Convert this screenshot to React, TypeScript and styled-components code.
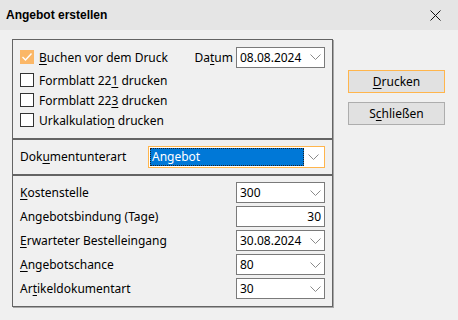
import React from "react";
import styled, { createGlobalStyle } from "styled-components";

const Global = createGlobalStyle`
  html, body { margin: 0; padding: 0; background: #f0f0f0; }
  body { font-family: "Noto Sans", "Open Sans", sans-serif; font-size: 12px; color: #000; }
`;

const Window = styled.div`
  width: 458px;
  height: 320px;
  background: #f0f0f0;
  display: flex;
  flex-direction: column;
  overflow: hidden;
`;

const TitleBar = styled.div`
  height: 30px;
  flex: none;
  background: #e5e5e5;
  display: flex;
  align-items: center;
  justify-content: space-between;
  padding-left: 6px;
`;

const Title = styled.div`
  font-family: "Liberation Sans", Arial, sans-serif;
  font-weight: bold;
  font-size: 12px;
  color: #000;
`;

const CloseBtn = styled.div`
  width: 46px;
  height: 30px;
  display: flex;
  align-items: center;
  justify-content: center;
`;

const Body = styled.div`
  display: flex;
  padding: 9px 0 0 12px;
`;

const LeftCol = styled.div`
  width: 321px;
  display: flex;
  flex-direction: column;
`;

const Panel = styled.div<{ $h: number }>`
  box-sizing: border-box;
  height: ${(p) => p.$h}px;
  border: 1px solid #646464;
  box-shadow: 1px 1px 0 #a8a8a8;
  padding: 6px 7px 0 7px;
  display: flex;
  flex-direction: column;
`;

const TopRow = styled.div`
  height: 22px;
  display: flex;
  align-items: center;
  justify-content: space-between;
  margin-bottom: 2px;
`;

const CheckRow = styled.label`
  height: 20px;
  display: flex;
  align-items: center;
  gap: 5px;
  white-space: nowrap;
`;

const Box = styled.span<{ $checked?: boolean }>`
  box-sizing: border-box;
  width: 14px;
  height: 14px;
  flex: none;
  border: 1px solid ${(p) => (p.$checked ? "#fbb767" : "#333")};
  background: ${(p) => (p.$checked ? "#fbb767" : "#fff")};
  display: flex;
  align-items: center;
  justify-content: center;
`;

const DateGroup = styled.div`
  display: flex;
  align-items: center;
  gap: 3px;
`;

const Key = styled.span`
  text-decoration: underline;
  text-underline-offset: 2px;
`;

const FieldRow = styled.div<{ $gap?: number }>`
  height: 21px;
  display: flex;
  align-items: center;
  margin-bottom: 3px;
`;

const Label = styled.div`
  flex: 1;
  white-space: nowrap;
`;

const Combo = styled.div<{ $w: number; $focus?: boolean }>`
  box-sizing: border-box;
  width: ${(p) => p.$w}px;
  height: ${(p) => (p.$focus ? 22 : 21)}px;
  flex: none;
  background: #fff;
  border: 1px solid ${(p) => (p.$focus ? "#ffb54c" : "#7a7a7a")};
  display: flex;
  align-items: stretch;
  padding: ${(p) => (p.$focus ? "1px" : "0")};
`;

const ComboText = styled.div`
  flex: 1;
  display: flex;
  align-items: center;
  padding-left: 3px;
  white-space: nowrap;
`;

const Selected = styled.div`
  flex: 1;
  display: flex;
  align-items: center;
  padding-left: 2px;
  background: #0078d7;
  color: #fff;
  outline: 1px dotted #222;
  outline-offset: -1px;
`;

const Arrow = styled.div<{ $w: number }>`
  width: ${(p) => p.$w}px;
  flex: none;
  display: flex;
  align-items: center;
  justify-content: center;
`;

const TextInput = styled.div`
  box-sizing: border-box;
  width: 89px;
  height: 21px;
  flex: none;
  background: #fff;
  border: 1px solid #7a7a7a;
  display: flex;
  align-items: center;
  justify-content: flex-end;
  padding-right: 3px;
`;

const RightCol = styled.div`
  margin-left: 15px;
  padding-top: 31px;
  display: flex;
  flex-direction: column;
  gap: 9px;
`;

const Button = styled.div<{ $default?: boolean }>`
  box-sizing: border-box;
  width: 97px;
  height: 23px;
  background: #e1e1e1;
  border: 1px solid ${(p) => (p.$default ? "#ffb54c" : "#adadad")};
  display: flex;
  align-items: center;
  justify-content: center;
`;

const Chevron = () => (
  <svg width="11" height="6" viewBox="0 0 11 6">
    <polyline points="0.5,0.5 5.5,5.5 10.5,0.5" fill="none" stroke="#8a8a8a" strokeWidth="1" />
  </svg>
);

const Check = () => (
  <svg width="12" height="10" viewBox="0 0 12 10">
    <polyline points="1.5,5 4.5,8 10.5,1.5" fill="none" stroke="#fff" strokeWidth="1.4" />
  </svg>
);

const Cross = () => (
  <svg width="11" height="11" viewBox="0 0 11 11">
    <path d="M0.5 0.5 L10.5 10.5 M10.5 0.5 L0.5 10.5" stroke="#111" strokeWidth="1" />
  </svg>
);

const ComboBox = ({ w, value }: { w: number; value: string }) => (
  <Combo $w={w}>
    <ComboText>{value}</ComboText>
    <Arrow $w={18}>
      <Chevron />
    </Arrow>
  </Combo>
);

export default function App() {
  return (
    <>
      <Global />
      <Window>
        <TitleBar>
          <Title>Angebot erstellen</Title>
          <CloseBtn>
            <Cross />
          </CloseBtn>
        </TitleBar>
        <Body>
          <LeftCol>
            <Panel $h={100}>
              <TopRow>
                <CheckRow>
                  <Box $checked>
                    <Check />
                  </Box>
                  <span>
                    <Key>B</Key>uchen vor dem Druck
                  </span>
                </CheckRow>
                <DateGroup>
                  <span>
                    Da<Key>t</Key>um
                  </span>
                  <ComboBox w={89} value="08.08.2024" />
                </DateGroup>
              </TopRow>
              <CheckRow>
                <Box />
                <span>
                  Formblatt 22<Key>1</Key> drucken
                </span>
              </CheckRow>
              <CheckRow>
                <Box />
                <span>
                  Formblatt 22<Key>3</Key> drucken
                </span>
              </CheckRow>
              <CheckRow>
                <Box />
                <span>
                  Urkalkulatio<Key>n</Key> drucken
                </span>
              </CheckRow>
            </Panel>
            <Panel $h={36}>
              <FieldRow>
                <Label>
                  Dok<Key>u</Key>mentunterart
                </Label>
                <Combo $w={177} $focus>
                  <Selected>Angebot</Selected>
                  <Arrow $w={19}>
                    <Chevron />
                  </Arrow>
                </Combo>
              </FieldRow>
            </Panel>
            <Panel $h={132}>
              <FieldRow>
                <Label>
                  <Key>K</Key>ostenstelle
                </Label>
                <ComboBox w={89} value="300" />
              </FieldRow>
              <FieldRow>
                <Label>Angebotsbindung (Tage)</Label>
                <TextInput>30</TextInput>
              </FieldRow>
              <FieldRow>
                <Label>
                  <Key>E</Key>rwarteter Bestelleingang
                </Label>
                <ComboBox w={89} value="30.08.2024" />
              </FieldRow>
              <FieldRow>
                <Label>
                  <Key>A</Key>ngebotschance
                </Label>
                <ComboBox w={89} value="80" />
              </FieldRow>
              <FieldRow>
                <Label>
                  Ar<Key>t</Key>ikeldokumentart
                </Label>
                <ComboBox w={89} value="30" />
              </FieldRow>
            </Panel>
          </LeftCol>
          <RightCol>
            <Button $default>
              <span>
                <Key>D</Key>rucken
              </span>
            </Button>
            <Button>
              <span>
                S<Key>c</Key>hließen
              </span>
            </Button>
          </RightCol>
        </Body>
      </Window>
    </>
  );
}
